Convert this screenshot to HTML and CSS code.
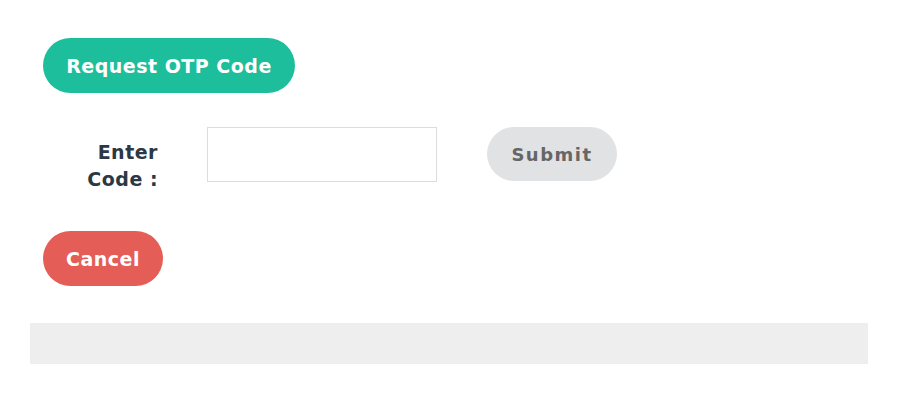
FILE: index.html
```html
<!DOCTYPE html>
<html lang="en">
<head>
  <meta charset="UTF-8">
  <title>OTP Verification</title>
  <link rel="stylesheet" href="styles.css">
</head>
<body>
  <div class="otp-panel">
    <button class="btn btn-request">Request OTP Code</button>

    <div class="code-row">
      <label class="code-label" for="otp-code">Enter<br>Code :</label>
      <input type="text" id="otp-code" class="code-input">
      <button class="btn btn-submit">Submit</button>
    </div>

    <button class="btn btn-cancel">Cancel</button>
  </div>

  <div class="footer-bar"></div>
</body>
</html>
```

FILE: styles.css
```css
* {
  margin: 0;
  padding: 0;
  box-sizing: border-box;
}

body {
  font-family: 'DejaVu Sans', Inter, sans-serif;
  background: #ffffff;
  width: 908px;
  height: 420px;
  overflow: hidden;
}

.otp-panel {
  padding: 38px 0 0 43px;
  display: flex;
  flex-direction: column;
  align-items: flex-start;
}

.btn {
  border: none;
  border-radius: 28px;
  height: 55px;
  font-family: inherit;
  font-size: 19px;
  font-weight: 700;
  letter-spacing: 0.5px;
  cursor: pointer;
}

.btn-request {
  background: #1dbe9c;
  color: #ffffff;
  width: 252px;
}

.btn-cancel {
  background: #e55d57;
  color: #ffffff;
  width: 120px;
  margin-top: 38px;
}

.code-row {
  display: flex;
  align-items: flex-start;
  margin-top: 34px;
}

.code-label {
  width: 115px;
  text-align: right;
  font-size: 19px;
  font-weight: 700;
  letter-spacing: 0.5px;
  line-height: 27px;
  color: #2b3845;
  padding-top: 12px;
}

.code-input {
  width: 230px;
  height: 55px;
  margin-left: 49px;
  border: 1px solid #dcdcdc;
  background: #ffffff;
  outline: none;
}

.btn-submit {
  background: #e1e2e4;
  color: #666666;
  width: 130px;
  height: 54px;
  margin-left: 50px;
  font-size: 18px;
  font-weight: 600;
  letter-spacing: 1.5px;
}

.footer-bar {
  margin: 37px 0 0 30px;
  width: 838px;
  height: 41px;
  background: #eeeeee;
}
```
